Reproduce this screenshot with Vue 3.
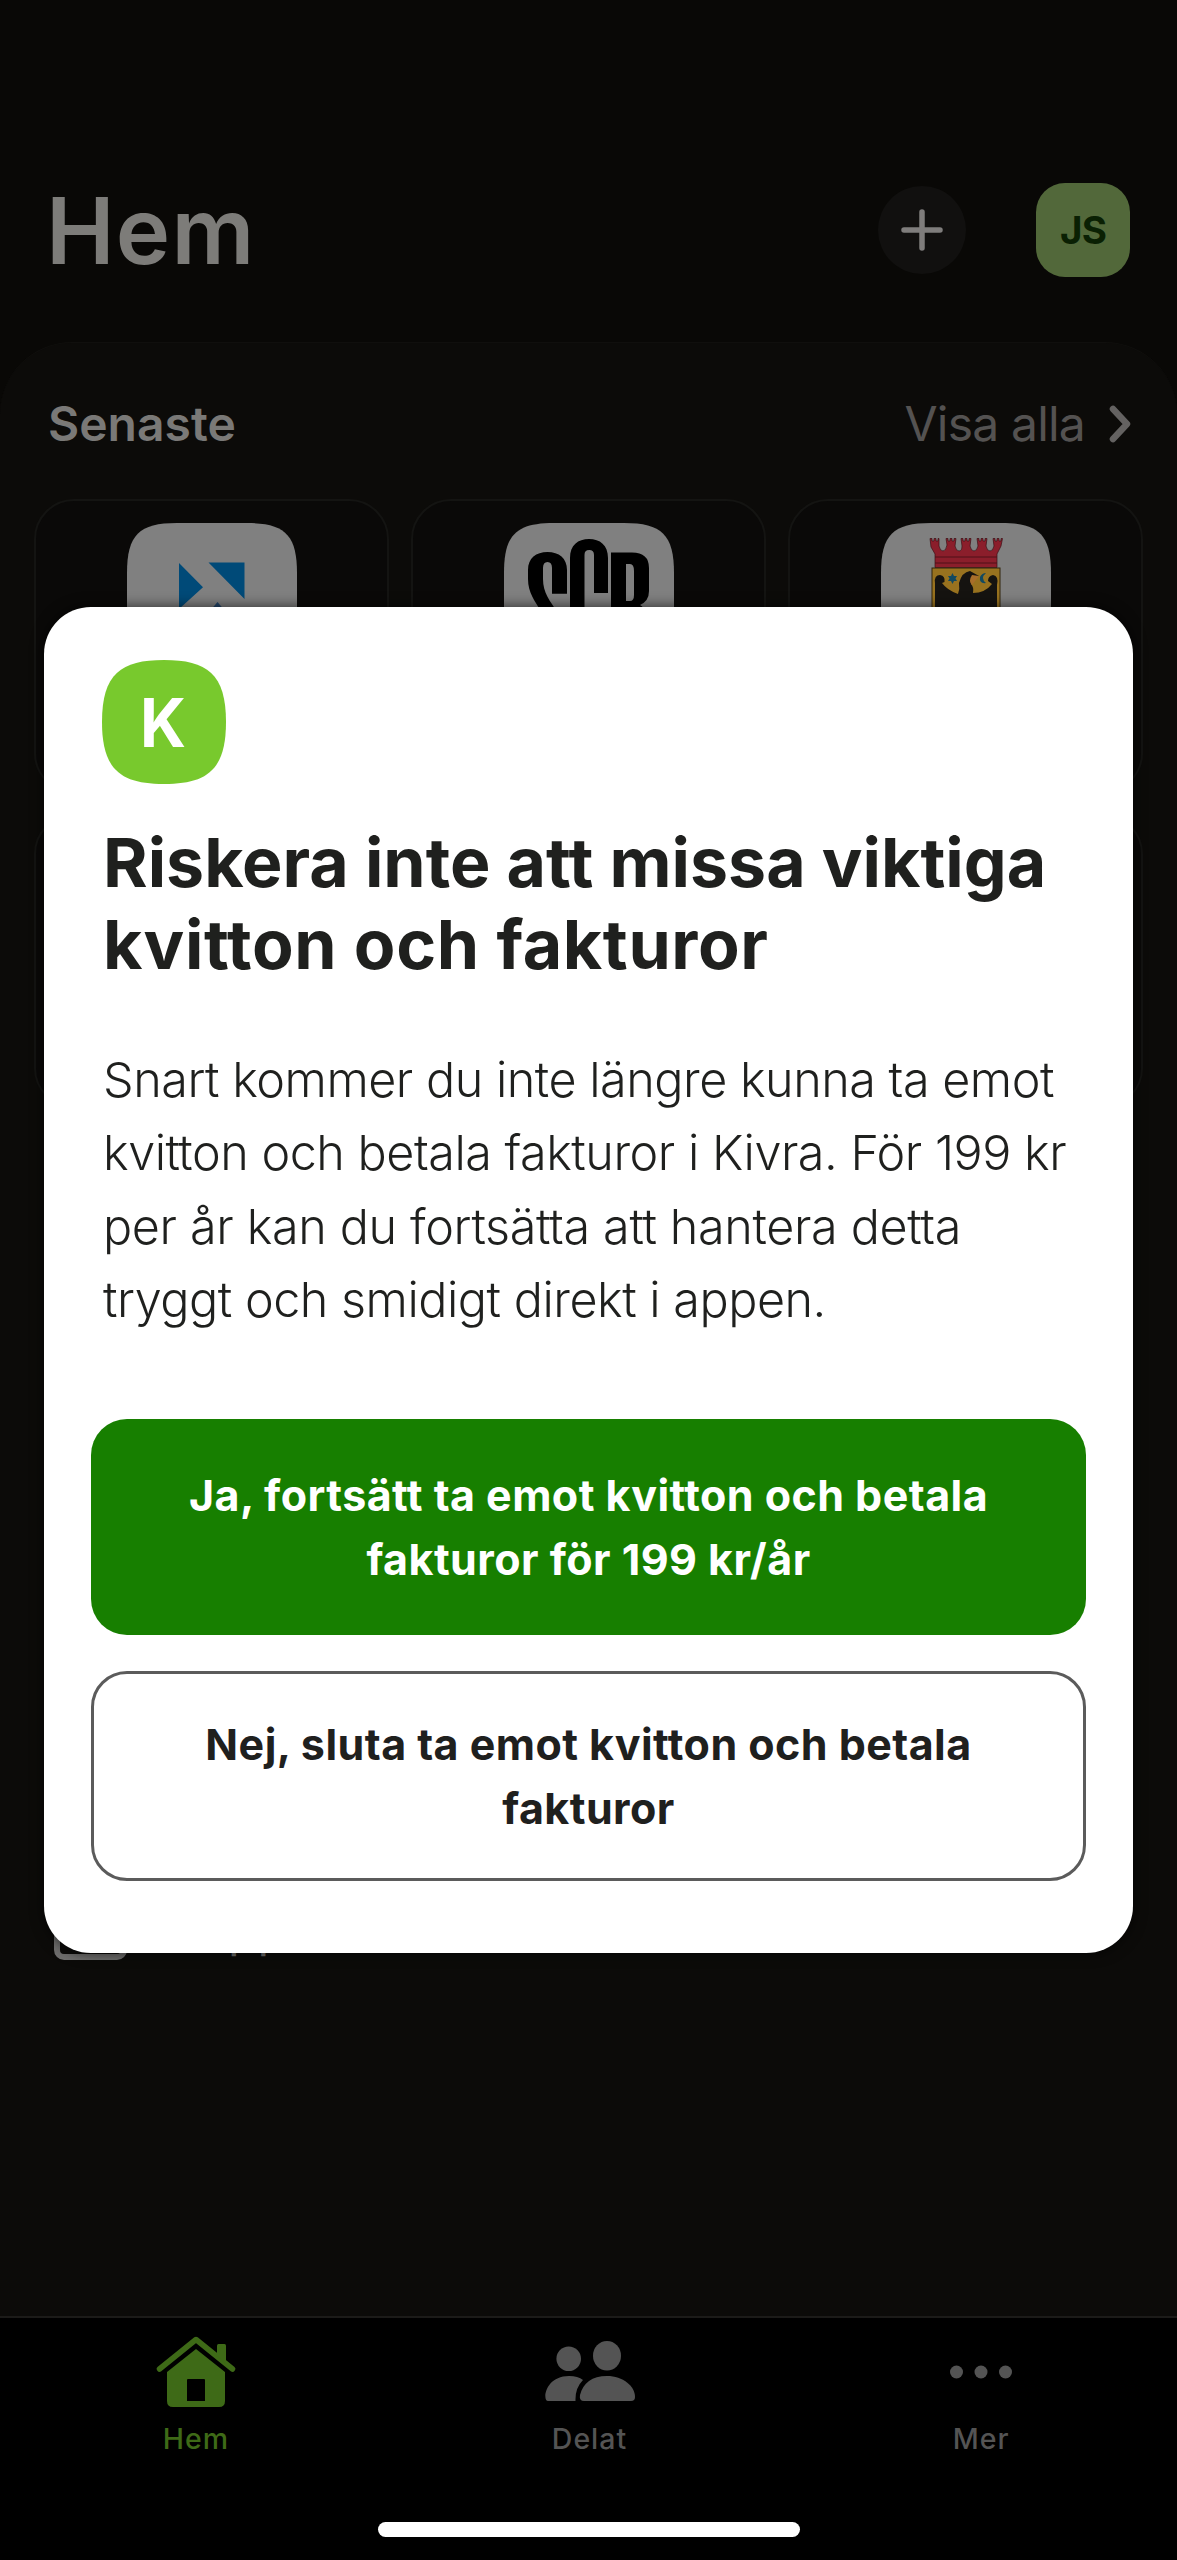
<script setup>
const titleLines = ['Riskera inte att missa viktiga', 'kvitton och fakturor']
const bodyLines = [
  'Snart kommer du inte längre kunna ta emot',
  'kvitton och betala fakturor i Kivra. För 199 kr',
  'per år kan du fortsätta att hantera detta',
  'tryggt och smidigt direkt i appen.',
]
</script>

<template>
  <div class="screen">
    <header class="top">
      <h1 class="heading">Hem</h1>
      <div class="actions">
        <button class="add" aria-label="plus">
          <svg width="42" height="42" viewBox="0 0 42 42"><path d="M21 3V39M3 21H39" /></svg>
        </button>
        <div class="avatar">JS</div>
      </div>
    </header>

    <main class="panel">
      <div class="section-head">
        <h2>Senaste</h2>
        <a class="all">
          <span>Visa alla</span>
          <svg width="22" height="38" viewBox="0 0 22 38"><path d="M4 4L18 19L4 34" /></svg>
        </a>
      </div>
      <div class="cards">
        <div class="card">
          <svg class="tile" viewBox="0 0 170 170">
            <path class="tile-bg" d="M0 85V50C0 12 12 0 50 0H120C158 0 170 12 170 50V120C170 158 158 170 120 170H50C12 170 0 158 0 120Z" />
            <path fill="#004a78" d="M52 40L76 64.300L52 86ZM81.500 39.500H117.500V76Z" />
            <path fill="#24466a" d="M90.500 79L99 89H82Z" />
          </svg>
        </div>
        <div class="card">
          <svg class="tile" viewBox="0 0 170 170">
            <path class="tile-bg" d="M0 85V50C0 12 12 0 50 0H120C158 0 170 12 170 50V120C170 158 158 170 120 170H50C12 170 0 158 0 120Z" />
            <path fill="#000" d="M48 70.700V45Q48 39 43.500 39Q39 39 39 45V56C39 70 46 78 54 90H38C31 78 24 70 24 56V47C24 35 32 29 43.500 29S63 35 63 47V70.700Z" />
            <path fill="#000" d="M66 90V35C66 22 74 16 85 16S104 22 104 35V70H90V32Q90 27 85.200 27T80.500 32V90Z" />
            <path fill="#000" fill-rule="evenodd" d="M107 29.500H128Q145 29.500 145 45V68Q145 78 136 82Q140 84 142 90H107ZM122 41V78H126Q130 78 130 72V48Q130 41 126 41Z" />
          </svg>
        </div>
        <div class="card">
          <svg class="tile" viewBox="0 0 170 170">
            <path class="tile-bg" d="M0 85V50C0 12 12 0 50 0H120C158 0 170 12 170 50V120C170 158 158 170 120 170H50C12 170 0 158 0 120Z" />
            <path fill="#8b1e2b" stroke="#3c1015" stroke-width=".7" d="M49 15.500H51V18H53V15.500H55V18H57V15.500H58V23Q59 28 62 28Q65 28 66 22L65 15.500H67V18H69V15.500H71V18H73V15.500H75L74 23Q75 28 78 28Q81 28 81 23L80 15.500H82V18H84V15.500H86V18H88V15.500H90L89 23Q90 28 93 28Q96 28 97 23L96 15.500H98V18H100V15.500H102V18H104V15.500H106L105 23Q106 28 109 28Q112 28 113 23L112 15.500H114V18H116V15.500H118V18H120V15.500H121.500L120 23L116 31V44.500H54V31L50 24Z" />
            <path stroke="#4e1019" stroke-width="1" d="M54 34H116M54 40H116" />
            <rect x="51" y="45" width="68" height="50" fill="#98721f" stroke="#30240d" />
            <path fill="#151310" d="M54 90V60Q53 52 59 52Q64.500 53 63.500 59L61 60Q66 67 77 71Q79 66 78 60Q81 49 89 48L98 53L92 55L90 61Q93 64 92 70Q104 70 111 61L107 58Q107 53 112 52Q118 53 116 62V90Z" />
            <path fill="#a86e2a" d="M91 52L98 53L91 62Q87 58 91 52Z" />
            <path fill="#124960" d="M71.500 50L73 53H76L74.500 55.500L76 58H73L71.500 61L70 58H67L68.500 55.500L67 53H70ZM105 50Q99 55 105 60Q98 61 99 54Q101 50 105 50Z" />
          </svg>
        </div>
        <div class="card"></div>
        <div class="card"></div>
        <div class="card"></div>
      </div>
      <div class="row">
        <div class="row-icon"></div>
        <span class="row-text">pp</span>
      </div>
    </main>

    <nav class="tabs">
      <div class="tab active">
        <svg width="82" height="74" viewBox="0 0 82 74">
          <path d="M4.500 34L41 4.500L77.500 34" fill="none" stroke="currentColor" stroke-width="5.500" stroke-linecap="round" stroke-linejoin="round" />
          <path fill="currentColor" d="M62 10.500Q62 9 63.500 9H69.500Q71 9 71 10.500V29L62 21Z" />
          <path fill="currentColor" fill-rule="evenodd" d="M41 14L70 37V66Q70 72 64 72H18Q12 72 12 66V37ZM32 45V66H50V45Q50 44 49 44H33Q32 44 32 45Z" />
        </svg>
        <span>Hem</span>
      </div>
      <div class="tab">
        <svg width="92" height="74" viewBox="0 0 92 74" fill="currentColor">
          <circle cx="24.700" cy="23.700" r="12.300" />
          <ellipse cx="63" cy="20.700" rx="14" ry="14.800" />
          <path d="M4 66C-2 66 1 41 25 41Q34 41 39 45Q31 53 31.500 66Z" />
          <path d="M40 66Q35 66 36 60C39 48 48 41 63 41C79 41 91 51 91 62Q91 66 87 66Z" />
        </svg>
        <span>Delat</span>
      </div>
      <div class="tab">
        <svg width="62" height="74" viewBox="0 0 62 74" fill="currentColor">
          <circle cx="6.500" cy="37" r="6.500" /><circle cx="31" cy="37" r="6.500" /><circle cx="55.500" cy="37" r="6.500" />
        </svg>
        <span>Mer</span>
      </div>
    </nav>
    <div class="indicator"></div>

    <section class="modal">
      <svg class="brand" width="124" height="124" viewBox="0 0 124 124">
        <path fill="#78c92d" d="M62 0C105 0 124 14 124 62S105 124 62 124S0 110 0 62S19 0 62 0Z" />
        <text x="38" y="86.700" textLength="46" lengthAdjust="spacingAndGlyphs">K</text>
      </svg>
      <h3 class="title"><span v-for="l in titleLines" :key="l">{{ l }}</span></h3>
      <p class="body"><span v-for="l in bodyLines" :key="l">{{ l }}</span></p>
      <div class="buttons">
        <button class="btn primary"><span>Ja, fortsätt ta emot kvitton och betala</span><span>fakturor för 199 kr/år</span></button>
        <button class="btn secondary"><span>Nej, sluta ta emot kvitton och betala</span><span>fakturor</span></button>
      </div>
    </section>
  </div>
</template>

<style>
body {
  margin: 0;
  background: #000;
}
</style>

<style scoped>
* {
  box-sizing: border-box;
  margin: 0;
}
.screen {
  position: relative;
  display: flex;
  flex-direction: column;
  width: 1177px;
  height: 2560px;
  overflow: hidden;
  background: #090806;
  font-family: Inter, 'Liberation Sans', sans-serif;
}
button {
  font-family: inherit;
  border: 0;
  padding: 0;
}
.top {
  display: flex;
  justify-content: space-between;
  align-items: center;
  height: 342px;
  padding: 117px 47px 0 46px;
  flex: none;
}
.heading {
  padding-top: 3px;
  font-size: 92px;
  line-height: 110px;
  font-weight: 640;
  letter-spacing: 1.200px;
  color: #7d7c79;
}
.actions {
  display: flex;
  align-items: center;
  gap: 70px;
}
.add {
  display: flex;
  align-items: center;
  justify-content: center;
  width: 88px;
  height: 88px;
  border-radius: 50%;
  background: #11100f;
}
.add path {
  fill: none;
  stroke: #7f7d7c;
  stroke-width: 5.500;
  stroke-linecap: round;
}
.avatar {
  display: flex;
  align-items: center;
  justify-content: center;
  width: 94px;
  height: 94px;
  border-radius: 29px;
  background: #52683a;
  color: #0a2003;
  font-size: 38.500px;
  font-weight: 700;
  letter-spacing: -0.800px;
}
.panel {
  height: 1974px;
  flex: none;
  border-radius: 72px 72px 0 0;
  background: #0c0b09;
  border-top: 1px solid #100f0d;
}
.section-head {
  display: flex;
  justify-content: space-between;
  align-items: center;
  height: 156px;
  padding: 5px 46px 0 48px;
}
.section-head h2 {
  font-size: 48px;
  font-weight: 600;
  letter-spacing: 0;
  color: #7a7977;
}
.all {
  display: flex;
  align-items: center;
  gap: 24px;
  font-size: 48px;
  letter-spacing: -0.800px;
  color: #545251;
}
.all path {
  fill: none;
  stroke: #646261;
  stroke-width: 6.500;
  stroke-linecap: round;
  stroke-linejoin: round;
}
.cards {
  display: grid;
  grid-template-columns: repeat(3, 355px);
  grid-auto-rows: 294px;
  gap: 21px 22px;
  padding-left: 34px;
}
.card {
  display: flex;
  justify-content: center;
  padding-top: 22px;
  border: 2px solid #141412;
  border-radius: 40px;
  background: #0a0908;
}
.tile {
  width: 170px;
  height: 170px;
}
.tile-bg {
  fill: #808080;
}
.row {
  display: flex;
  align-items: flex-end;
  gap: 101px;
  margin-top: 792px;
  padding-left: 54px;
}
.row-icon {
  width: 73px;
  height: 60px;
  border: 6px solid #6f6e6d;
  border-radius: 10px;
}
.row-text {
  font-size: 48px;
  line-height: 60px;
  color: #6f6e6d;
}
.tabs {
  display: flex;
  height: 244px;
  border-top: 2px solid #1c1b19;
  background: #000;
}
.tab {
  display: flex;
  flex: 1;
  flex-direction: column;
  align-items: center;
  padding-top: 17px;
  color: #545454;
  font-size: 28.500px;
  font-weight: 450;
  letter-spacing: 1px;
}
.tab span {
  margin-top: 12px;
  line-height: 36px;
}
.tab.active {
  padding-right: 2px;
  color: #3e6a17;
}
.indicator {
  position: absolute;
  left: 378px;
  bottom: 23px;
  width: 422px;
  height: 15px;
  border-radius: 8px;
  background: #fff;
}
.modal {
  position: absolute;
  left: 44px;
  top: 607px;
  width: 1089px;
  height: 1346px;
  padding: 53px 47px 0;
  border-radius: 47px;
  background: #fff;
  box-shadow: 0 0 14px rgba(0, 0, 0, 0.7);
  color: #1f201e;
}
.brand {
  display: block;
  margin-left: 11px;
}
.brand text {
  font-size: 68px;
  font-weight: 700;
  fill: #fff;
}
.title {
  display: flex;
  flex-direction: column;
  margin: 38px 0 0 12px;
  font-size: 68px;
  font-weight: 700;
  line-height: 81.500px;
  white-space: nowrap;
}
.title span:last-child {
  letter-spacing: 0.600px;
}
.body {
  display: flex;
  flex-direction: column;
  margin: 58px 0 0 12px;
  font-size: 48.500px;
  font-weight: 310;
  line-height: 73.300px;
  letter-spacing: -0.480px;
  font-feature-settings: 'calt' 0;
  white-space: nowrap;
}
.body span:nth-child(3) {
  letter-spacing: -0.350px;
}
.buttons {
  display: flex;
  flex-direction: column;
  gap: 36px;
  margin-top: 83px;
}
.btn {
  display: flex;
  flex-direction: column;
  align-items: center;
  justify-content: center;
  width: 995px;
  border-radius: 36px;
  font-size: 43px;
  font-weight: 680;
  line-height: 64.300px;
  letter-spacing: 0.450px;
  font-feature-settings: 'calt' 0;
  white-space: nowrap;
}
.primary {
  height: 216px;
  background: #177f00;
  color: #fff;
}
.secondary {
  height: 210px;
  border: 3px solid #5b5b5b;
  background: #fff;
  color: #1f201e;
}
</style>
